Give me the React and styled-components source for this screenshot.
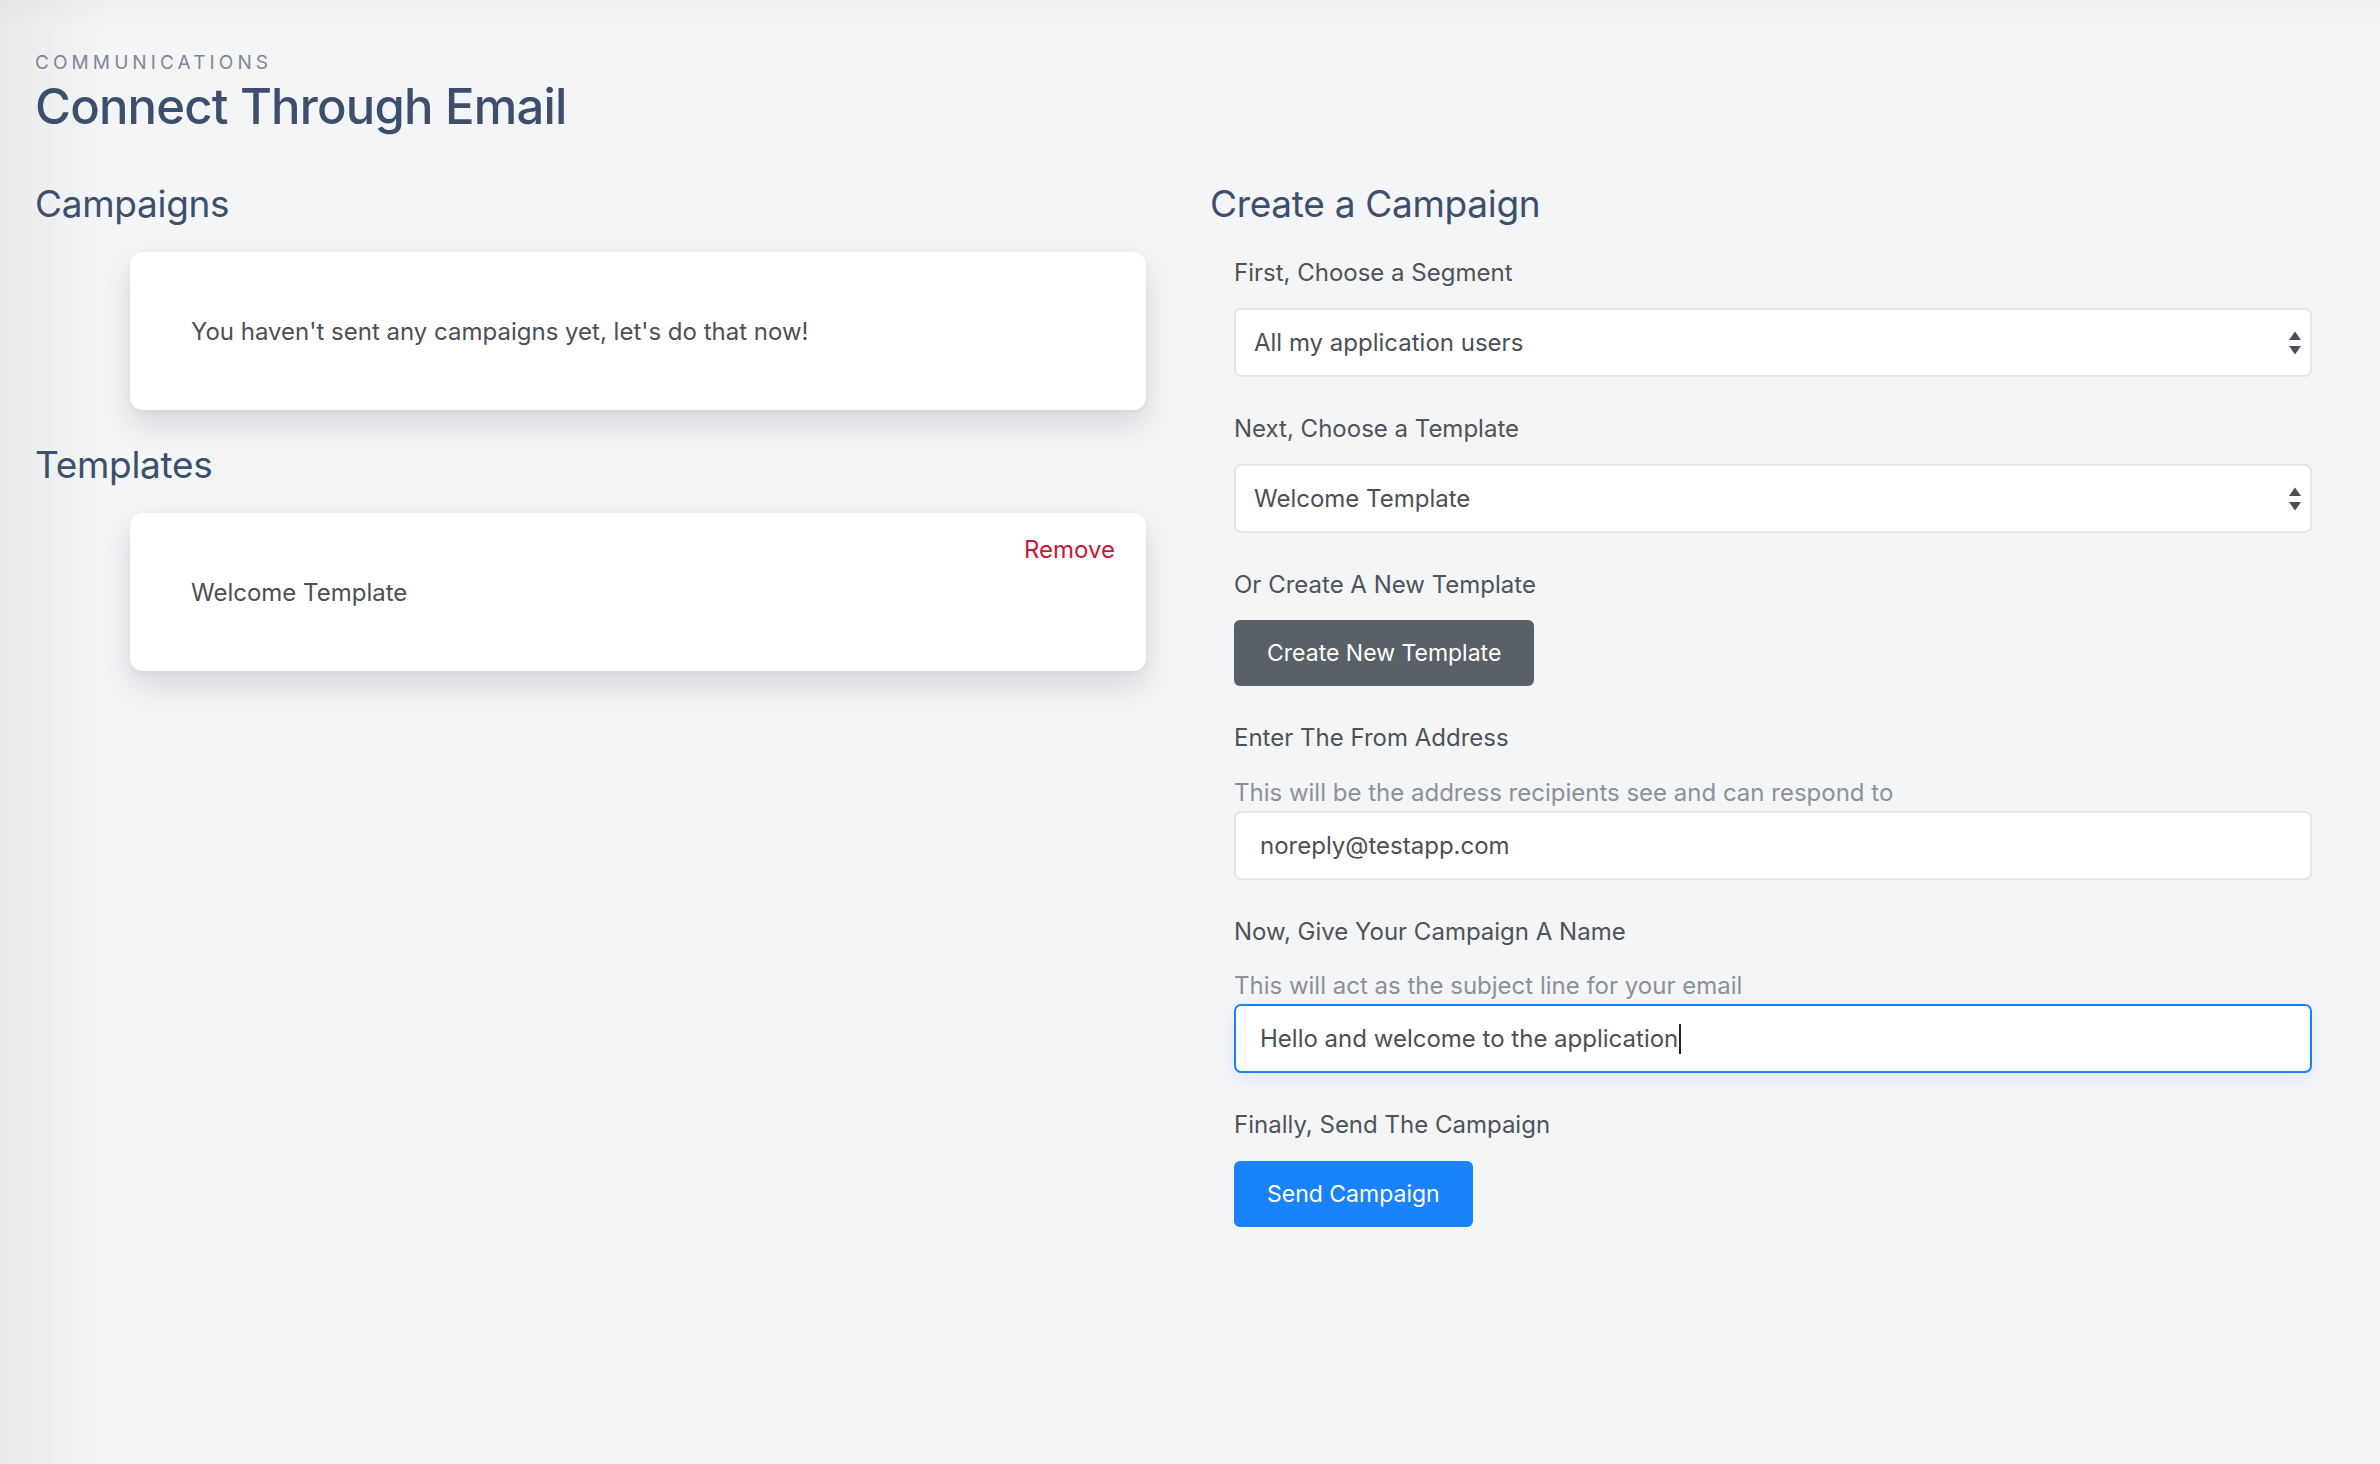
import React from 'react'
import styled, { createGlobalStyle } from 'styled-components'

const GlobalStyle = createGlobalStyle`
  html, body {
    margin: 0;
    padding: 0;
    background: #f4f5f7;
  }
  body {
    font-family: Inter, "Noto Sans", "Liberation Sans", sans-serif;
    color: #4b5058;
  }
  * { box-sizing: border-box; }
`

const Page = styled.main`
  min-height: 1464px;
  padding: 51px 35px 60px 35px;
  background:
    linear-gradient(to right, rgba(0,0,0,0.045), rgba(0,0,0,0) 110px),
    linear-gradient(to bottom, rgba(0,0,0,0.025), rgba(0,0,0,0) 30px),
    #f4f5f7;
`

const Eyebrow = styled.div`
  font-size: 19px;
  line-height: 24px;
  letter-spacing: 4.1px;
  text-transform: uppercase;
  color: #7c8799;
`

const Title = styled.h1`
  margin: 2px 0 0 0;
  font-size: 49px;
  line-height: 60px;
  font-weight: 500;
  letter-spacing: -0.8px;
  color: #3c4f6d;
`

const Columns = styled.div`
  display: grid;
  grid-template-columns: 1fr 1fr;
  gap: 40px;
  margin-top: 45px;
`

const Column = styled.section`
  display: flex;
  flex-direction: column;
`

const Heading = styled.h2`
  margin: 0;
  font-size: 37px;
  line-height: 44px;
  font-weight: 400;
  letter-spacing: -0.3px;
  color: #3c4f6d;
`

const CardList = styled.div`
  margin: 26px 24px 33px 95px;
  display: flex;
  flex-direction: column;
  gap: 24px;
`

const Card = styled.div`
  position: relative;
  height: 158px;
  padding: 0 61px;
  display: flex;
  align-items: center;
  background: #fff;
  border-radius: 13px;
  box-shadow: 0 15px 30px rgba(40, 48, 60, 0.14), 0 2px 6px rgba(40, 48, 60, 0.05);
  font-size: 24px;
  color: #4b5058;
`

const RemoveLink = styled.a`
  position: absolute;
  top: 22px;
  right: 31px;
  font-size: 24px;
  color: #c8173a;
  cursor: pointer;
`

const Form = styled.form`
  margin: 31px 33px 0 24px;
  display: flex;
  flex-direction: column;
`

const Field = styled.div`
  display: flex;
  flex-direction: column;
  margin-bottom: 36px;
`

const Label = styled.label`
  font-size: 24px;
  line-height: 32px;
  color: #4d535b;
  margin-bottom: ${p => p.$mb || 19}px;
`

const Help = styled.div`
  font-size: 24px;
  line-height: 30px;
  color: #8b9199;
  margin: 0 0 3px 0;
`

const SelectBox = styled.div`
  position: relative;
  height: 69px;
  display: flex;
  align-items: center;
  padding: 0 18px;
  background: #fff;
  border: 2px solid #e3e5ea;
  border-radius: 7px;
  font-size: 24px;
  color: #4b5058;
`

const Arrows = styled.svg`
  position: absolute;
  right: 8px;
  top: 50%;
  transform: translateY(-50%);
`

const Input = styled.div`
  height: 69px;
  display: flex;
  align-items: center;
  padding: 0 24px;
  background: #fff;
  border: 2px solid ${p => (p.$focused ? '#1a82fb' : '#e3e5ea')};
  border-radius: 7px;
  font-size: 24px;
  color: #4b5058;
  box-shadow: ${p => (p.$focused ? '0 6px 16px rgba(26, 130, 251, 0.09)' : 'none')};
`

const Caret = styled.span`
  display: inline-block;
  width: 2px;
  height: 30px;
  margin-left: 1px;
  background: #222;
`

const Button = styled.button`
  align-self: flex-start;
  height: 66px;
  padding: 0 33px;
  border: none;
  border-radius: 6px;
  font-family: inherit;
  font-size: 23px;
  color: #fff;
  background: ${p => (p.$variant === 'primary' ? '#1a82fb' : '#5a6068')};
  cursor: pointer;
`

function SelectArrows() {
  return (
    <Arrows width="14" height="26" viewBox="0 0 14 26">
      <path d="M7 1.5 L13 10 H1 Z" fill="#4b5058" />
      <path d="M7 24.5 L13 16 H1 Z" fill="#4b5058" />
    </Arrows>
  )
}

export default function App() {
  return (
    <>
      <GlobalStyle />
      <Page>
        <Eyebrow>Communications</Eyebrow>
        <Title>Connect Through Email</Title>

        <Columns>
          <Column>
            <Heading>Campaigns</Heading>
            <CardList>
              <Card>You haven't sent any campaigns yet, let's do that now!</Card>
            </CardList>

            <Heading>Templates</Heading>
            <CardList>
              <Card>
                Welcome Template
                <RemoveLink>Remove</RemoveLink>
              </Card>
            </CardList>
          </Column>

          <Column>
            <Heading>Create a Campaign</Heading>
            <Form>
              <Field>
                <Label>First, Choose a Segment</Label>
                <SelectBox>
                  All my application users
                  <SelectArrows />
                </SelectBox>
              </Field>

              <Field>
                <Label>Next, Choose a Template</Label>
                <SelectBox>
                  Welcome Template
                  <SelectArrows />
                </SelectBox>
              </Field>

              <Field>
                <Label>Or Create A New Template</Label>
                <Button type="button">Create New Template</Button>
              </Field>

              <Field>
                <Label $mb={24}>Enter The From Address</Label>
                <Help>This will be the address recipients see and can respond to</Help>
                <Input>noreply@testapp.com</Input>
              </Field>

              <Field>
                <Label $mb={23}>Now, Give Your Campaign A Name</Label>
                <Help>This will act as the subject line for your email</Help>
                <Input $focused>
                  Hello and welcome to the application<Caret />
                </Input>
              </Field>

              <Field>
                <Label $mb={20}>Finally, Send The Campaign</Label>
                <Button type="button" $variant="primary">Send Campaign</Button>
              </Field>
            </Form>
          </Column>
        </Columns>
      </Page>
    </>
  )
}
